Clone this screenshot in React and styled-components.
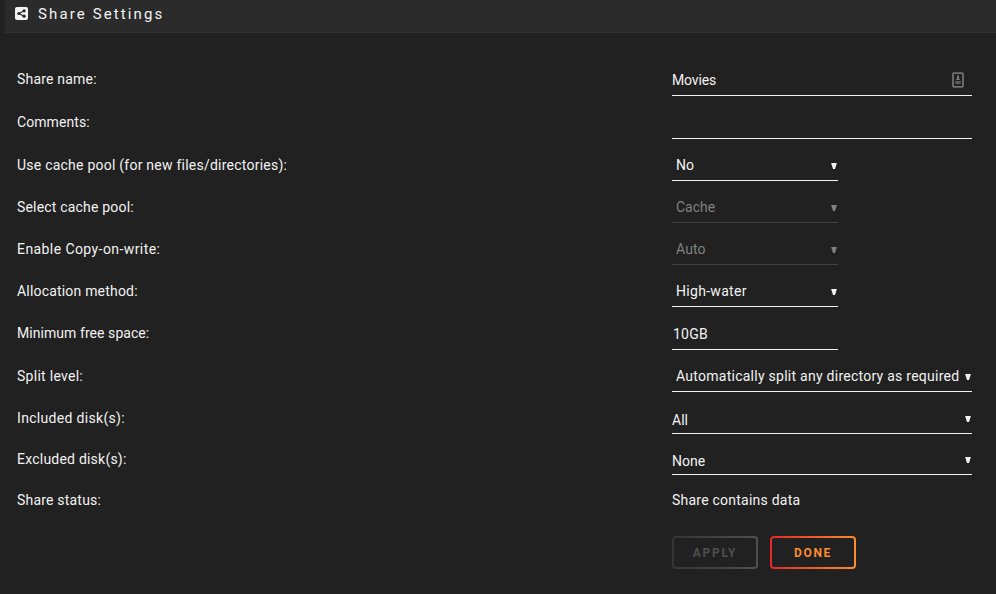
import React from "react";
import styled, { createGlobalStyle } from "styled-components";

const GlobalStyle = createGlobalStyle`
  * { box-sizing: border-box; }
  body {
    margin: 0;
    background: #212121;
    color: #f2f2f2;
    font: 14px/20px Roboto, "Liberation Sans", sans-serif;
    overflow: hidden;
  }
`;

const Page = styled.main`
  width: 996px;
  height: 594px;
  background: #212121;
`;

const TitleBar = styled.header`
  display: flex;
  align-items: center;
  gap: 10px;
  height: 33px;
  margin-left: 5px;
  padding: 0 10px 5px;
  background: #2b2b2b;
  border-bottom: 1px solid #303030;
`;

const Title = styled.h1`
  margin: 0;
  font-size: 15px;
  font-weight: 400;
  line-height: 20px;
  letter-spacing: 2.12px;
  white-space: nowrap;
`;

const Form = styled.section`
  padding: 20px 0 0 17px;
`;

const Row = styled.div`
  display: grid;
  grid-template-columns: 655px 1fr;
  align-items: end;
  height: ${(p) => p.$height}px;
`;

const Label = styled.label`
  padding-bottom: ${(p) => p.$drop}px;
  white-space: nowrap;
`;

const Text = styled.span`
  letter-spacing: ${(p) => p.$track || 0}px;
  white-space: nowrap;
`;

const Field = styled.div`
  display: flex;
  align-items: flex-end;
  justify-content: space-between;
  width: ${(p) => (p.$wide ? 300 : 166)}px;
  height: 30px;
  padding: 0 0 ${(p) => p.$drop}px ${(p) => p.$indent}px;
  border-bottom: 1px solid ${(p) => (p.$disabled ? "#444444" : "#f2f2f2")};
  color: ${(p) => (p.$disabled ? "#808080" : "#f2f2f2")};
`;

const Arrow = styled.svg`
  display: block;
  flex: none;
  width: 6px;
  height: 7px;
  margin: 0 1px ${(p) => p.$lift}px 0;
`;

const ContactIcon = styled.svg`
  width: 12px;
  height: 16px;
  margin: 0 8px 2px 0;
`;

const Actions = styled.div`
  display: flex;
  gap: 12px;
  padding: 20px 0 0 655px;
`;

const Button = styled.button`
  width: 86px;
  height: 33px;
  padding: 0;
  border: 2px solid transparent;
  border-radius: 4px;
  background: linear-gradient(#212121, #212121) padding-box,
    linear-gradient(90deg, ${(p) => p.$from}, ${(p) => p.$to}) border-box;
  color: ${(p) => p.$to};
  font: 700 12px/16px Roboto, "Liberation Sans", sans-serif;
  letter-spacing: ${(p) => p.$track}px;
`;

const rows = [
  { height: 43, label: "Share name:", track: 0.2, drop: 7, value: "Movies", vtrack: -0.15, wide: true, vdrop: 5, indent: 0, contact: true },
  { height: 43, label: "Comments:", track: 0.08, drop: 7, value: "", wide: true, vdrop: 5, indent: 0 },
  { height: 42, label: "Use cache pool (for new files/directories):", track: 0.235, drop: 6, value: "No", vdrop: 5, indent: 4, arrow: 5 },
  { height: 42, label: "Select cache pool:", track: 0.19, drop: 6, value: "Cache", vdrop: 5, indent: 4, arrow: 5, disabled: true },
  { height: 42, label: "Enable Copy-on-write:", track: 0.42, drop: 6, value: "Auto", vtrack: 0.1, vdrop: 5, indent: 4, arrow: 5, disabled: true },
  { height: 42, label: "Allocation method:", track: 0.19, drop: 6, value: "High-water", vtrack: 0.3, vdrop: 5, indent: 4, arrow: 5 },
  { height: 43, label: "Minimum free space:", track: 0.06, drop: 7, value: "10GB", vtrack: 0.25, vdrop: 5, indent: 1 },
  { height: 42, label: "Split level:", track: 0.28, drop: 6, value: "Automatically split any directory as required", vtrack: 0.26, wide: true, vdrop: 5, indent: 4, arrow: 5 },
  { height: 42, label: "Included disk(s):", track: 0.32, drop: 6, value: "All", wide: true, vdrop: 3, indent: 0, arrow: 7 },
  { height: 41, label: "Excluded disk(s):", track: 0.22, drop: 6, value: "None", wide: true, vdrop: 3, indent: 0, arrow: 7 },
];

function ShareIcon() {
  return (
    <svg width="13" height="13" viewBox="0 0 13 13">
      <rect width="13" height="13" rx="2" fill="#f2f2f2" />
      <path d="M9 3.8 4 6.5l5 2.7" fill="none" stroke="#2b2b2b" strokeWidth="1.1" />
      <circle cx="9.1" cy="3.8" r="1.6" fill="#2b2b2b" />
      <circle cx="3.9" cy="6.5" r="1.6" fill="#2b2b2b" />
      <circle cx="9.1" cy="9.2" r="1.6" fill="#2b2b2b" />
    </svg>
  );
}

function Contact() {
  return (
    <ContactIcon viewBox="0 0 12 16">
      <rect x="1" y="1.2" width="10" height="13.6" rx="0.8" fill="none" stroke="#707070" strokeWidth="1.8" />
      <path d="M5 3.5h2V6l1 2H4l1-2z" fill="#777777" />
      <path d="M3.3 9h5.4v3H3.3z" fill="#5c5c5c" />
    </ContactIcon>
  );
}

export default function App() {
  return (
    <Page>
      <GlobalStyle />
      <TitleBar>
        <ShareIcon />
        <Title>Share Settings</Title>
      </TitleBar>
      <Form>
        {rows.map((r) => (
          <Row key={r.label} $height={r.height}>
            <Label $drop={r.drop}>
              <Text $track={r.track}>{r.label}</Text>
            </Label>
            <Field $wide={r.wide} $drop={r.vdrop} $indent={r.indent} $disabled={r.disabled}>
              <Text $track={r.vtrack}>{r.value}</Text>
              {r.contact && <Contact />}
              {r.arrow && (
                <Arrow $lift={r.arrow} viewBox="0 0 6 7">
                  <path d="M0.1 0h5.8L4 6H2z" fill="currentColor" />
                </Arrow>
              )}
            </Field>
          </Row>
        ))}
        <Row $height={41}>
          <Label $drop={6}>
            <Text $track={0.2}>Share status:</Text>
          </Label>
          <Label as="div" $drop={6}>
            <Text $track={0.23}>Share contains data</Text>
          </Label>
        </Row>
        <Actions>
          <Button disabled $from="#353535" $to="#4f4f4f" $track={1.7}>APPLY</Button>
          <Button $from="#e22828" $to="#ff8c2f" $track={1.7}>DONE</Button>
        </Actions>
      </Form>
    </Page>
  );
}
